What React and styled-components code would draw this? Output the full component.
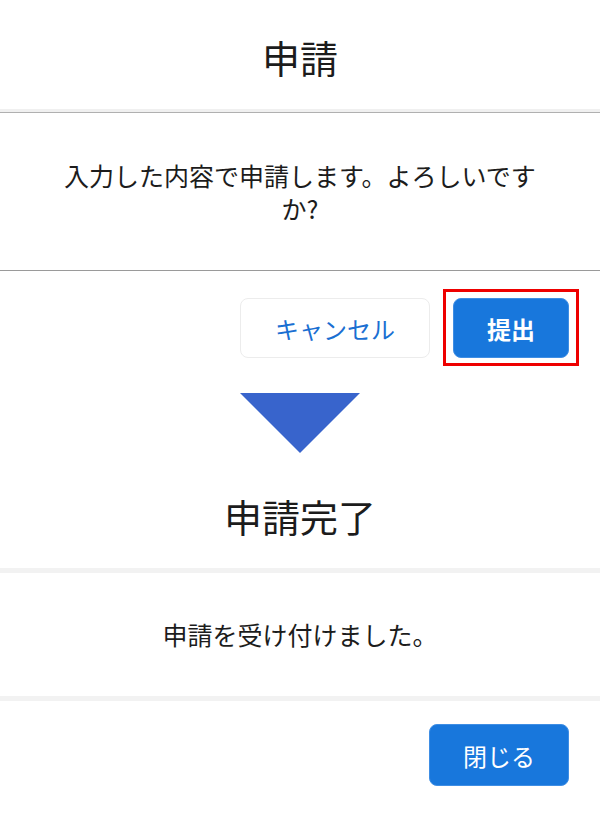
import React from "react";
import styled, { createGlobalStyle } from "styled-components";

const Global = createGlobalStyle`
  html, body { margin: 0; padding: 0; background: #ffffff; }
  body { font-family: "Noto Sans CJK JP", "Noto Sans", sans-serif; color: #1f1f1f; }
  * { box-sizing: border-box; }
`;

const Page = styled.div`
  width: 600px;
  height: 813px;
  overflow: hidden;
  display: flex;
  flex-direction: column;
  background: #ffffff;
`;

const Dialog = styled.section`
  display: flex;
  flex-direction: column;
  background: #ffffff;
`;

const Header = styled.header`
  height: ${(p) => p.$h}px;
  display: flex;
  align-items: center;
  justify-content: center;
  font-size: 38px;
  font-weight: 400;
  color: #1c1c1c;
  ${(p) =>
    p.$style === "line"
      ? `border-bottom: 1.5px solid #b0b0b0; box-shadow: inset 0 -3px 0 #f0f0f0;`
      : `border-bottom: 5px solid #f2f2f2;`}
`;

const Body = styled.div`
  height: ${(p) => p.$h}px;
  display: flex;
  align-items: center;
  justify-content: center;
  padding: 0 60px;
  text-align: center;
  font-size: 25px;
  line-height: 33px;
  color: #1c1c1c;
  ${(p) =>
    p.$style === "line"
      ? `border-bottom: 1px solid #9a9a9a;`
      : `border-bottom: 5px solid #f2f2f2;`}
`;

const Footer = styled.footer`
  height: ${(p) => p.$h}px;
  display: flex;
  align-items: flex-start;
  justify-content: flex-end;
  gap: ${(p) => p.$gap || 0}px;
  padding: ${(p) => p.$pt}px ${(p) => p.$pr}px 0 0;
`;

const Button = styled.button`
  width: ${(p) => p.$w}px;
  height: ${(p) => p.$hh}px;
  margin-top: ${(p) => p.$mt || 0}px;
  border-radius: 8px;
  font-family: inherit;
  font-size: 24px;
  font-weight: ${(p) => p.$weight || 400};
  display: flex;
  align-items: center;
  justify-content: center;
  cursor: pointer;
  ${(p) =>
    p.$variant === "primary"
      ? `background: #1877dc; color: #ffffff; border: 1px solid #3f8ee4;`
      : `background: #ffffff; color: #1a6fd2; border: 1px solid #ececec;`}
`;

const Highlight = styled.div`
  border: 3px solid #ee0000;
  padding: 6px 7px 5px 7px;
  display: flex;
`;

const ArrowWrap = styled.div`
  display: flex;
  justify-content: center;
  padding: 12px 0 10px;
`;

const Arrow = () => (
  <ArrowWrap>
    <svg width="120" height="60" viewBox="0 0 120 60">
      <polygon points="0,0 120,0 60,60" fill="#3864cc" />
    </svg>
  </ArrowWrap>
);

export default function App() {
  return (
    <>
      <Global />
      <Page>
        <Dialog>
          <Header $h={113} $style="line">申請</Header>
          <Body $h={158} $style="line">入力した内容で申請します。よろしいですか?</Body>
          <Footer $h={110} $pt={18} $pr={21} $gap={13}>
            <Button $w={190} $hh={60} $mt={9}>キャンセル</Button>
            <Highlight>
              <Button $variant="primary" $weight={700} $w={116} $hh={60}>提出</Button>
            </Highlight>
          </Footer>
        </Dialog>
        <Arrow />
        <Dialog>
          <Header $h={110} $style="band">申請完了</Header>
          <Body $h={128} $style="band">申請を受け付けました。</Body>
          <Footer $h={108} $pt={23} $pr={31}>
            <Button $variant="primary" $w={140} $hh={62}>閉じる</Button>
          </Footer>
        </Dialog>
      </Page>
    </>
  );
}
